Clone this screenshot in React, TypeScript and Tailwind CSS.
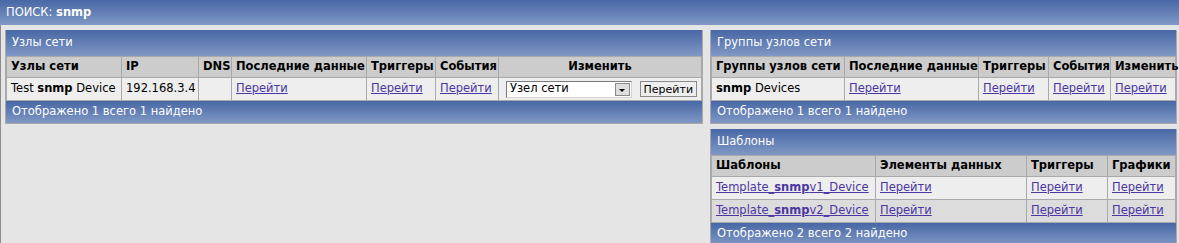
import type { ReactNode } from 'react';

const font = { fontFamily: '"DejaVu Sans", Verdana, sans-serif' };

const bar = 'bg-gradient-to-b from-[#4867a5] to-[#8098c5] text-white text-[11.5px]';
const thBase = 'h-[21px] border border-[#a9a9a9] bg-[#cccccc] px-[4px] font-bold text-black whitespace-nowrap';
const th = `${thBase} text-left`;
const td = 'h-[23px] border border-[#a9a9a9] px-[4px] text-black whitespace-nowrap';

function Go() {
  return <a className="text-[#4b36a3] underline cursor-pointer">Перейти</a>;
}

function Panel({
  title,
  footer,
  children,
}: {
  readonly title: string;
  readonly footer: string;
  readonly children: ReactNode;
}) {
  return (
    <section className="border border-[#a9a9a9] border-t-0 bg-[#eeeeee]">
      <div className={`${bar} h-[26px] flex items-center pl-[6px]`}>{title}</div>
      <table className="w-full table-fixed border-collapse text-[11.5px]">{children}</table>
      <div className={`${bar} h-[22px] flex items-center pl-[6px]`}>{footer}</div>
    </section>
  );
}

export default function App() {
  return (
    <div className="w-[1179px] h-[243px] overflow-hidden bg-[#e5e5e5]" style={font}>
      <header className={`${bar} h-[25px] flex items-center pl-[6px]`}>
        ПОИСК:&nbsp;<b>snmp</b>
      </header>
      <div className="flex gap-[7px] pt-[5px] pl-[4px] h-[218px] border-l border-[#8c8c8c]">
        {/* Узлы сети */}
        <div className="w-[698px]">
          <Panel title="Узлы сети" footer="Отображено 1 всего 1 найдено">
            <colgroup>
              <col className="w-[115px]" />
              <col className="w-[77px]" />
              <col className="w-[33px]" />
              <col className="w-[135px]" />
              <col className="w-[69px]" />
              <col className="w-[63px]" />
              <col />
            </colgroup>
            <thead>
              <tr>
                <th className={th}>Узлы сети</th>
                <th className={th}>IP</th>
                <th className={th}>DNS</th>
                <th className={th}>Последние данные</th>
                <th className={th}>Триггеры</th>
                <th className={th}>События</th>
                <th className={`${thBase} text-center`}>Изменить</th>
              </tr>
            </thead>
            <tbody>
              <tr className="bg-[#eeeeee]">
                <td className={td}>
                  Test <b>snmp</b> Device
                </td>
                <td className={td}>192.168.3.4</td>
                <td className={td}></td>
                <td className={td}><Go /></td>
                <td className={td}><Go /></td>
                <td className={td}><Go /></td>
                <td className={`${td} pl-[7px] pr-[4px]`}>
                  <div className="flex items-center gap-[8px]">
                    <div className="w-[127px] h-[17px] flex items-center justify-between border border-t-[#7b7b7b] border-l-[#7b7b7b] border-b-[#d4d4d4] border-r-[#d4d4d4] bg-white pl-[3px]">
                      <span>Узел сети</span>
                      <span className="w-[15px] h-[13px] mr-[1px] flex items-end justify-center pb-[3px] bg-[#dedede] border border-[#8a8a8a]">
                        <span className="block w-0 h-0 border-l-[3px] border-r-[3px] border-t-[3px] border-l-transparent border-r-transparent border-t-black" />
                      </span>
                    </div>
                    <button className="h-[16px] w-[58px] px-0 bg-[#eeeeee] border border-[#8a8a8a] text-[11px] leading-none">
                      Перейти
                    </button>
                  </div>
                </td>
              </tr>
            </tbody>
          </Panel>
        </div>

        <div className="w-[467px] flex flex-col gap-[5px]">
          {/* Группы узлов сети */}
          <Panel title="Группы узлов сети" footer="Отображено 1 всего 1 найдено">
            <colgroup>
              <col className="w-[133px]" />
              <col className="w-[134px]" />
              <col className="w-[70px]" />
              <col className="w-[62px]" />
              <col />
            </colgroup>
            <thead>
              <tr>
                <th className={th}>Группы узлов сети</th>
                <th className={th}>Последние данные</th>
                <th className={th}>Триггеры</th>
                <th className={th}>События</th>
                <th className={th}>Изменить</th>
              </tr>
            </thead>
            <tbody>
              <tr className="bg-[#eeeeee]">
                <td className={td}>
                  <b>snmp</b> Devices
                </td>
                <td className={td}><Go /></td>
                <td className={td}><Go /></td>
                <td className={td}><Go /></td>
                <td className={td}><Go /></td>
              </tr>
            </tbody>
          </Panel>

          {/* Шаблоны */}
          <Panel title="Шаблоны" footer="Отображено 2 всего 2 найдено">
            <colgroup>
              <col className="w-[164px]" />
              <col className="w-[151px]" />
              <col className="w-[81px]" />
              <col />
            </colgroup>
            <thead>
              <tr>
                <th className={th}>Шаблоны</th>
                <th className={th}>Элементы данных</th>
                <th className={th}>Триггеры</th>
                <th className={th}>Графики</th>
              </tr>
            </thead>
            <tbody>
              {['v1', 'v2'].map((v, i) => (
                <tr key={v} className={i === 0 ? 'bg-[#eeeeee]' : 'bg-[#dcdcdc]'}>
                  <td className={td}>
                    <a className="text-[#4b36a3] underline cursor-pointer">
                      Template_<b>snmp</b>
                      {v}_Device
                    </a>
                  </td>
                  <td className={td}><Go /></td>
                  <td className={td}><Go /></td>
                  <td className={td}><Go /></td>
                </tr>
              ))}
            </tbody>
          </Panel>
        </div>
      </div>
    </div>
  );
}
